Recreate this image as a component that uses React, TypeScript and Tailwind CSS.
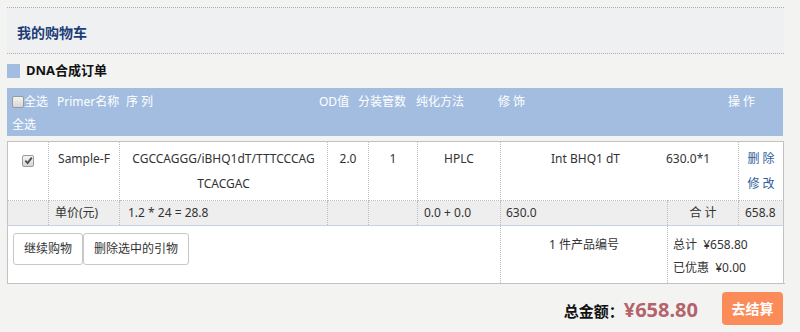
import React from "react";

const cell = "border border-dotted border-[#bdbdbd] align-top px-[6px]";
const top = `${cell} py-[4px] leading-[25px]`;
const sub = `${cell} py-0 leading-[24px]`;

function Box({ checked }: { checked?: boolean }) {
  return (
    <span className="inline-flex h-[12px] w-[12px] items-center justify-center rounded-[2px] border border-[#9a9a9a] bg-gradient-to-b from-[#f4f4f4] to-[#d6d6d6] align-[-2px]">
      {checked && (
        <svg width="9" height="9" viewBox="0 0 10 10">
          <path d="M1.5 5.2 L4 7.8 L8.6 1.8" fill="none" stroke="#4a4a4a" strokeWidth="2" />
        </svg>
      )}
    </span>
  );
}

export default function App() {
  return (
    <div className="min-h-[332px] bg-[#f3f3f2] pt-[7px] font-['Noto_Sans','Noto_Sans_CJK_SC',sans-serif] text-[12px] text-[#333]">
      {/* page title */}
      <div className="ml-[7px] flex h-[47px] w-[777px] items-center border-y border-dotted border-[#b0b0b0] bg-[#eff0f2] pl-[10px] pt-[3px]">
        <span className="text-[14px] font-bold text-[#1d3d78]">我的购物车</span>
      </div>

      {/* section */}
      <div className="ml-[7px] mt-[10px] flex h-[14px] items-center gap-[6px]">
        <span className="h-[14px] w-[13px] bg-[#a3bde0]" />
        <span className="text-[13px] font-bold text-[#111]">DNA合成订单</span>
      </div>

      {/* header bar */}
      <div className="ml-[7px] mt-[10px] h-[48px] w-[776px] bg-[#a3bde0] pl-[5px] text-white">
        <div className="flex h-[25px] items-center pt-[2px]">
          <span className="w-[12px] shrink-0"><Box /></span>
          <span className="w-[33px] shrink-0">全选</span>
          <span className="w-[69px] shrink-0">Primer名称</span>
          <span className="w-[193px] shrink-0">序 列</span>
          <span className="w-[39px] shrink-0">OD值</span>
          <span className="w-[58px] shrink-0">分装管数</span>
          <span className="w-[82px] shrink-0">纯化方法</span>
          <span className="w-[230px] shrink-0">修 饰</span>
          <span className="shrink-0">操 作</span>
        </div>
        <div className="flex h-[23px] items-center">全选</div>
      </div>

      {/* order table */}
      <table className="ml-[7px] mt-[5px] w-[776px] table-fixed border-collapse border border-solid border-[#c2c2c2] bg-white">
        <colgroup>
          <col className="w-[41px]" />
          <col className="w-[71px]" />
          <col className="w-[208px]" />
          <col className="w-[41px]" />
          <col className="w-[49px]" />
          <col className="w-[83px]" />
          <col className="w-[167px]" />
          <col className="w-[71px]" />
          <col className="w-[45px]" />
        </colgroup>
        <tbody>
          <tr>
            <td className={`${top} text-center`}><Box checked /></td>
            <td className={`${top} text-center`}>Sample-F</td>
            <td className={`${top} text-center`}>CGCCAGGG/iBHQ1dT/TTTCCCAG<br />TCACGAC</td>
            <td className={`${top} text-center`}>2.0</td>
            <td className={`${top} text-center`}>1</td>
            <td className={`${top} text-center`}>HPLC</td>
            <td colSpan={2} className="border border-dotted border-[#bdbdbd] align-top py-[4px] pl-[50px] leading-[25px]">
              <div className="flex">
                <span className="w-[115px] shrink-0">Int BHQ1 dT</span>
                <span>630.0*1</span>
              </div>
            </td>
            <td className={`${top} text-center text-[#2e5e9e]`}>删 除<br />修 改</td>
          </tr>
          <tr className="bg-[#eeeeee]">
            <td className={sub}></td>
            <td className={sub}>单价(元)</td>
            <td className="border border-dotted border-[#bdbdbd] py-0 pl-[8px] leading-[24px]">1.2 * 24 = 28.8</td>
            <td className={sub}></td>
            <td className={sub}></td>
            <td className={sub}>0.0 + 0.0</td>
            <td className="border border-dotted border-[#bdbdbd] py-0 pl-[5px] leading-[24px]">630.0</td>
            <td className={`${sub} text-center`}>合 计</td>
            <td className={sub}>658.8</td>
          </tr>
          <tr className="border-t border-solid border-[#c5d2e3]">
            <td colSpan={6} className="align-top px-[5px] pt-[7px] pb-[18px]">
              <div className="flex">
                <button className="h-[32px] rounded-[3px] border border-[#c8c8c8] bg-white px-[10px] text-[12px] text-[#333]">继续购物</button>
                <button className="h-[32px] rounded-[3px] border border-[#c8c8c8] bg-white px-[10px] text-[12px] text-[#333]">删除选中的引物</button>
              </div>
            </td>
            <td className="border-x border-dotted border-[#bdbdbd] align-top pt-[7px] text-center leading-[23px]">1 件产品编号</td>
            <td colSpan={3} className="align-top pl-[5px] pt-[7px] leading-[23px]">
              <div>总计&nbsp;&nbsp;¥658.80</div>
              <div>已优惠&nbsp;&nbsp;¥0.00</div>
            </td>
          </tr>
        </tbody>
      </table>

      {/* footer */}
      <div className="ml-[7px] mt-[8px] flex w-[776px] items-center justify-end">
        <span className="mt-[6px] text-[15px] font-bold text-[#111]">总金额：</span>
        <span className="mt-[2px] text-[20px] font-bold text-[#b5636b]">¥658.80</span>
        <button className="ml-[24px] h-[33px] w-[61px] rounded-[4px] bg-[#fb8c59] text-[14px] font-bold text-white">去结算</button>
      </div>
    </div>
  );
}
